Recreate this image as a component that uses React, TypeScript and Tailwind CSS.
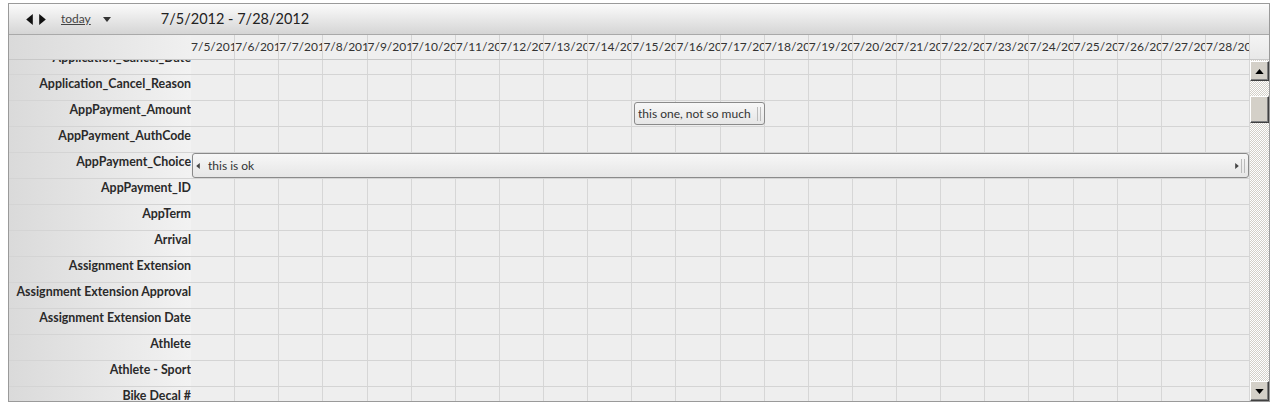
const DAYS = Array.from({ length: 24 }, (_, i) => `7/${i + 5}/2012`);

const ROWS = [
  "Application_Cancel_Date",
  "Application_Cancel_Reason",
  "AppPayment_Amount",
  "AppPayment_AuthCode",
  "AppPayment_Choice",
  "AppPayment_ID",
  "AppTerm",
  "Arrival",
  "Assignment Extension",
  "Assignment Extension Approval",
  "Assignment Extension Date",
  "Athlete",
  "Athlete - Sport",
  "Bike Decal #",
];

function Tri({ dir, className = "" }: { dir: "l" | "r" | "u" | "d"; className?: string }) {
  const pts = {
    l: "6,0 6,10 0,5",
    r: "0,0 0,10 6,5",
    u: "0,6 10,6 5,0",
    d: "0,0 10,0 5,6",
  }[dir];
  const vb = dir === "l" || dir === "r" ? "0 0 6 10" : "0 0 10 6";
  return (
    <svg viewBox={vb} className={className}>
      <polygon points={pts} fill="currentColor" />
    </svg>
  );
}

function EventBar({ label, full }: { label: string; full?: boolean }) {
  return (
    <div className="flex h-full items-center rounded-[3px] border border-[#8a8a8a] bg-gradient-to-b from-[#f7f7f7] to-[#e6e6e6] text-[12px] text-[#333]">
      {full && <Tri dir="l" className="ml-[3px] mr-[8px] h-[6px] w-[4px] text-[#444]" />}
      <span className={full ? "" : "pl-[3px]"}>{label}</span>
      <div className="ml-auto flex items-center gap-[2px] pr-[3px]">
        {full && <Tri dir="r" className="h-[6px] w-[4px] text-[#444]" />}
        <span className="h-[14px] w-px bg-[#bbb]" />
        <span className="h-[14px] w-px bg-[#bbb]" />
      </div>
    </div>
  );
}

function ScrollButton({ dir }: { dir: "u" | "d" }) {
  return (
    <div className="flex h-[20px] items-center justify-center border border-t-white border-l-white border-r-[#404040] border-b-[#404040] bg-[#d4d0c8] shadow-[inset_-1px_-1px_0_#808080]">
      <Tri dir={dir} className="h-[5px] w-[9px] text-black" />
    </div>
  );
}

export default function App() {
  return (
    <div className="bg-white pt-[3px] pl-2 font-['Lato','Noto_Sans',sans-serif] text-[#333]">
      <div className="flex h-[399px] w-[1262px] flex-col overflow-hidden border border-[#9a9a9a]">
        <div className="flex h-[30px] shrink-0 items-center bg-gradient-to-b from-[#fbfbfb] to-[#d5d5d5]">
          <Tri dir="l" className="ml-[17px] h-[11px] w-[7px] text-[#111]" />
          <Tri dir="r" className="ml-[6px] h-[11px] w-[7px] text-[#111]" />
          <span className="ml-[15px] text-[12px] text-[#444] underline">today</span>
          <Tri dir="d" className="ml-[12px] h-[5px] w-[8px] text-[#333]" />
          <span className="ml-[50px] text-[14.5px] text-[#222]">7/5/2012 - 7/28/2012</span>
        </div>

        <div className="flex h-[25px] shrink-0 border-t border-[#a9a9a9]">
          <div className="w-[182px] bg-gradient-to-r from-[#dadada] to-[#f0f0f0]" />
          <div className="grid w-[1059px] grid-cols-[repeat(24,minmax(0,1fr))] bg-[#efefef]">
            {DAYS.map((d) => (
              <div key={d} className="overflow-hidden whitespace-nowrap border-r border-[#d4d4d4] pt-[4px] text-[12px] leading-[16px] text-[#333]">
                {d}
              </div>
            ))}
          </div>
          <div className="flex-1 bg-gradient-to-b from-[#f4f4f4] to-[#e8e8e8]" />
        </div>

        <div className="flex min-h-0 flex-1 border-t border-[#c8c8c8]">
          <div className="min-w-0 flex-1 overflow-hidden">
            <div className="-mt-[11px]">
              {ROWS.map((r) => (
                <div key={r} className="flex h-[26px] border-b border-[#d4d4d4]">
                  <div className="w-[182px] shrink-0 bg-gradient-to-r from-[#dadada] to-[#f2f2f2] pt-[1px] text-right text-[12.4px] font-bold leading-[16px] text-[#2a2a2a]">
                    {r}
                  </div>
                  <div className="relative grid w-[1059px] grid-cols-[repeat(24,minmax(0,1fr))] bg-[#eeeeee]">
                    {DAYS.map((d) => (
                      <div key={d} className="border-r border-[#d6d6d6]" />
                    ))}
                    {r === "AppPayment_Amount" && (
                      <div className="absolute top-[1px] left-[443px] h-[23px] w-[131px]">
                        <EventBar label="this one, not so much" />
                      </div>
                    )}
                    {r === "AppPayment_Choice" && (
                      <div className="absolute top-0 left-[1px] h-[25px] w-[1057px]">
                        <EventBar label="this is ok" full />
                      </div>
                    )}
                  </div>
                </div>
              ))}
            </div>
          </div>
          <div className="flex w-[19px] shrink-0 flex-col bg-[repeating-conic-gradient(#d4d0c8_0_25%,#ffffff_0_50%)] bg-[length:2px_2px] pt-[1px]">
            <ScrollButton dir="u" />
            <div className="mt-[15px] h-[27px] border border-t-white border-l-white border-r-[#404040] border-b-[#404040] bg-[#d4d0c8] shadow-[inset_-1px_-1px_0_#808080]" />
            <div className="mt-auto">
              <ScrollButton dir="d" />
            </div>
          </div>
        </div>
      </div>
    </div>
  );
}
